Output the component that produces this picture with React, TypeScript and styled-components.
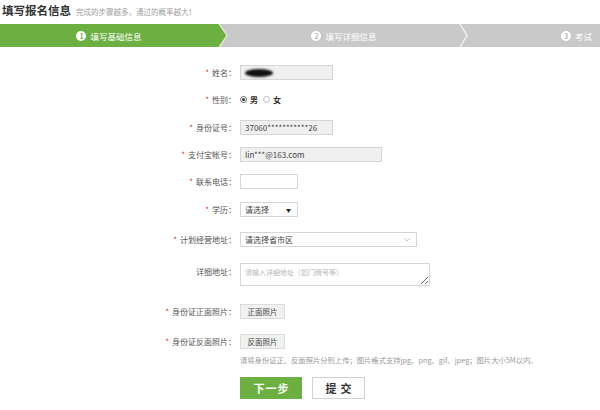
import styled, { createGlobalStyle } from "styled-components";
import { ChevronDown } from "lucide-react";

const GlobalStyle = createGlobalStyle`
    body {
        margin: 0;
        background: #fff;
        font-family: "Noto Sans CJK SC", "Noto Sans", sans-serif;
        color: #444;
    }
`
const Page = styled.div`
    width: 600px;
    height: 410px;
    overflow: hidden;
`
const Header = styled.div`
    display: flex;
    align-items: baseline;
    padding: 2px 2px 0;
    height: 22px;
`
const Title = styled.div`
    font-size: 11.5px;
    font-weight: 700;
    color: #333;
`
const Subtitle = styled.div`
    margin-left: 5px;
    font-size: 7.5px;
    color: #a0a0a0;
`
const StepBar = styled.div`
    display: flex;
    height: 23px;
    background: #c9c9c9;
`
const Step = styled.div<{ $w?: number; $active?: boolean; $end?: boolean }>`
    display: flex;
    align-items: center;
    justify-content: ${p => (p.$end ? "flex-end" : "center")};
    ${p => (p.$w ? `width: ${p.$w}px;` : "flex: 1;")}
    padding-right: ${p => (p.$end ? "8px" : "0")};
    background: ${p => (p.$active ? "#6cb041" : "transparent")};
    color: #fff;
    font-size: 8.5px;
`
const StepNum = styled.span<{ $active?: boolean }>`
    display: inline-flex;
    align-items: center;
    justify-content: center;
    width: 10px;
    height: 10px;
    border-radius: 50%;
    background: #fff;
    color: ${p => (p.$active ? "#6cb041" : "#b5b5b5")};
    font-size: 7px;
    font-weight: 700;
    margin-right: 4px;
`
const Arrow = styled.svg`
    display: block;
    flex: none;
`
const Form = styled.div`
    display: flex;
    flex-direction: column;
`
const Row = styled.div<{ $top: number; $h?: number; $start?: boolean }>`
    display: flex;
    align-items: ${p => (p.$start ? "flex-start" : "center")};
    margin-top: ${p => p.$top}px;
    height: ${p => p.$h ?? 15}px;
`
const Label = styled.div<{ $pad?: number }>`
    width: 236px;
    margin-right: 4px;
    text-align: right;
    font-size: 8px;
    color: #555;
    padding-top: ${p => p.$pad ?? 0}px;
    flex: none;
`
const Star = styled.span`
    color: #e2332e;
    margin-right: 3px;
`
const Field = styled.div<{ $w: number; $filled?: boolean }>`
    box-sizing: border-box;
    display: flex;
    align-items: center;
    justify-content: space-between;
    width: ${p => p.$w}px;
    height: 15px;
    padding: 0 4px;
    border: 1px solid #d6d6d6;
    background: ${p => (p.$filled ? "#f0f0f0" : "#fff")};
    font-size: 8px;
    color: #444;
`
const Redact = styled.span`
    width: 28px;
    height: 8px;
    border-radius: 50%;
    background: #111;
    filter: blur(1px);
`
const Radio = styled.span<{ $on?: boolean }>`
    box-sizing: border-box;
    display: inline-flex;
    align-items: center;
    justify-content: center;
    width: 7px;
    height: 7px;
    border-radius: 50%;
    border: 1px solid ${p => (p.$on ? "#666" : "#bbb")};
    margin-right: 3px;
    &::after {
        content: "";
        width: 3px;
        height: 3px;
        border-radius: 50%;
        background: ${p => (p.$on ? "#333" : "transparent")};
    }
`
const RadioText = styled.span`
    font-size: 8px;
    color: #333;
    margin-right: 5px;
    font-weight: 700;
`
const Caret = styled.span`
    font-size: 5px;
    color: #222;
    margin-right: 2px;
`
const Area = styled.textarea`
    box-sizing: border-box;
    width: 190px;
    height: 23px;
    border: 1px solid #d6d6d6;
    padding: 3px 4px;
    font-family: inherit;
    font-size: 7px;
    &::placeholder {
        color: #b8b8b8;
    }
`
const Upload = styled.div`
    box-sizing: border-box;
    display: flex;
    align-items: center;
    justify-content: center;
    width: 45px;
    height: 15px;
    border: 1px solid #dcdcdc;
    background: #f1f1f1;
    font-size: 7.5px;
    color: #444;
`
const Hint = styled.div`
    margin: 6px 0 0 240px;
    font-size: 7.3px;
    color: #9a9a9a;
    white-space: nowrap;
`
const Actions = styled.div`
    display: flex;
    gap: 10px;
    margin: 12px 0 0 240px;
`
const Button = styled.div<{ $primary?: boolean }>`
    box-sizing: border-box;
    display: flex;
    align-items: center;
    justify-content: center;
    width: ${p => (p.$primary ? 62 : 53)}px;
    height: 22px;
    background: ${p => (p.$primary ? "#6cb041" : "#fff")};
    border: 1px solid ${p => (p.$primary ? "#6cb041" : "#d0d0d0")};
    color: ${p => (p.$primary ? "#fff" : "#333")};
    font-size: 11px;
    font-weight: 700;
    letter-spacing: ${p => (p.$primary ? "1px" : "4px")};
    text-indent: ${p => (p.$primary ? "1px" : "4px")};
`

function App() {
    return (
        <Page>
            <GlobalStyle />
            <Header>
                <Title>填写报名信息</Title>
                <Subtitle>完成的步骤越多，通过的概率越大！</Subtitle>
            </Header>
            <StepBar>
                <Step $w={218} $active>
                    <StepNum $active>1</StepNum>填写基础信息
                </Step>
                <Arrow width="12" height="23" viewBox="0 0 12 23">
                    <polygon points="0,0 1,0 9,11.5 1,23 0,23" fill="#6cb041" />
                    <polyline points="1,0 9,11.5 1,23" fill="none" stroke="#e8f0e0" strokeWidth="1.2" />
                </Arrow>
                <Step $w={228}>
                    <StepNum>2</StepNum>填写详细信息
                </Step>
                <Arrow width="12" height="23" viewBox="0 0 12 23">
                    <polyline points="2,0 9,11.5 2,23" fill="none" stroke="#f4f4f4" strokeWidth="1.3" />
                </Arrow>
                <Step $end>
                    <StepNum>3</StepNum>考试
                </Step>
            </StepBar>
            <Form>
                <Row $top={18}>
                    <Label><Star>*</Star>姓名：</Label>
                    <Field $w={93} $filled><Redact /><span /></Field>
                </Row>
                <Row $top={12}>
                    <Label><Star>*</Star>性别：</Label>
                    <Radio $on /><RadioText>男</RadioText>
                    <Radio /><RadioText>女</RadioText>
                </Row>
                <Row $top={13}>
                    <Label><Star>*</Star>身份证号：</Label>
                    <Field $w={93} $filled>37060***********26</Field>
                </Row>
                <Row $top={12}>
                    <Label><Star>*</Star>支付宝帐号：</Label>
                    <Field $w={142} $filled>lin***@163.com</Field>
                </Row>
                <Row $top={12}>
                    <Label><Star>*</Star>联系电话：</Label>
                    <Field $w={58} />
                </Row>
                <Row $top={13}>
                    <Label><Star>*</Star>学历：</Label>
                    <Field $w={58}>请选择<Caret>▼</Caret></Field>
                </Row>
                <Row $top={15}>
                    <Label><Star>*</Star>计划经营地址：</Label>
                    <Field $w={177}>
                        请选择省市区
                        <ChevronDown size={10} color="#999" strokeWidth={1.5} />
                    </Field>
                </Row>
                <Row $top={16} $h={23} $start>
                    <Label $pad={3}>详细地址：</Label>
                    <Area placeholder="请输入详细地址（如门牌号等）" />
                </Row>
                <Row $top={18}>
                    <Label><Star>*</Star>身份证正面照片：</Label>
                    <Upload>正面照片</Upload>
                </Row>
                <Row $top={15}>
                    <Label><Star>*</Star>身份证反面照片：</Label>
                    <Upload>反面照片</Upload>
                </Row>
                <Hint>请将身份证正、反面照片分别上传；图片格式支持jpg、png、gif、jpeg；图片大小5M以内。</Hint>
                <Actions>
                    <Button $primary>下一步</Button>
                    <Button>提交</Button>
                </Actions>
            </Form>
        </Page>
    );
}

export default App;
